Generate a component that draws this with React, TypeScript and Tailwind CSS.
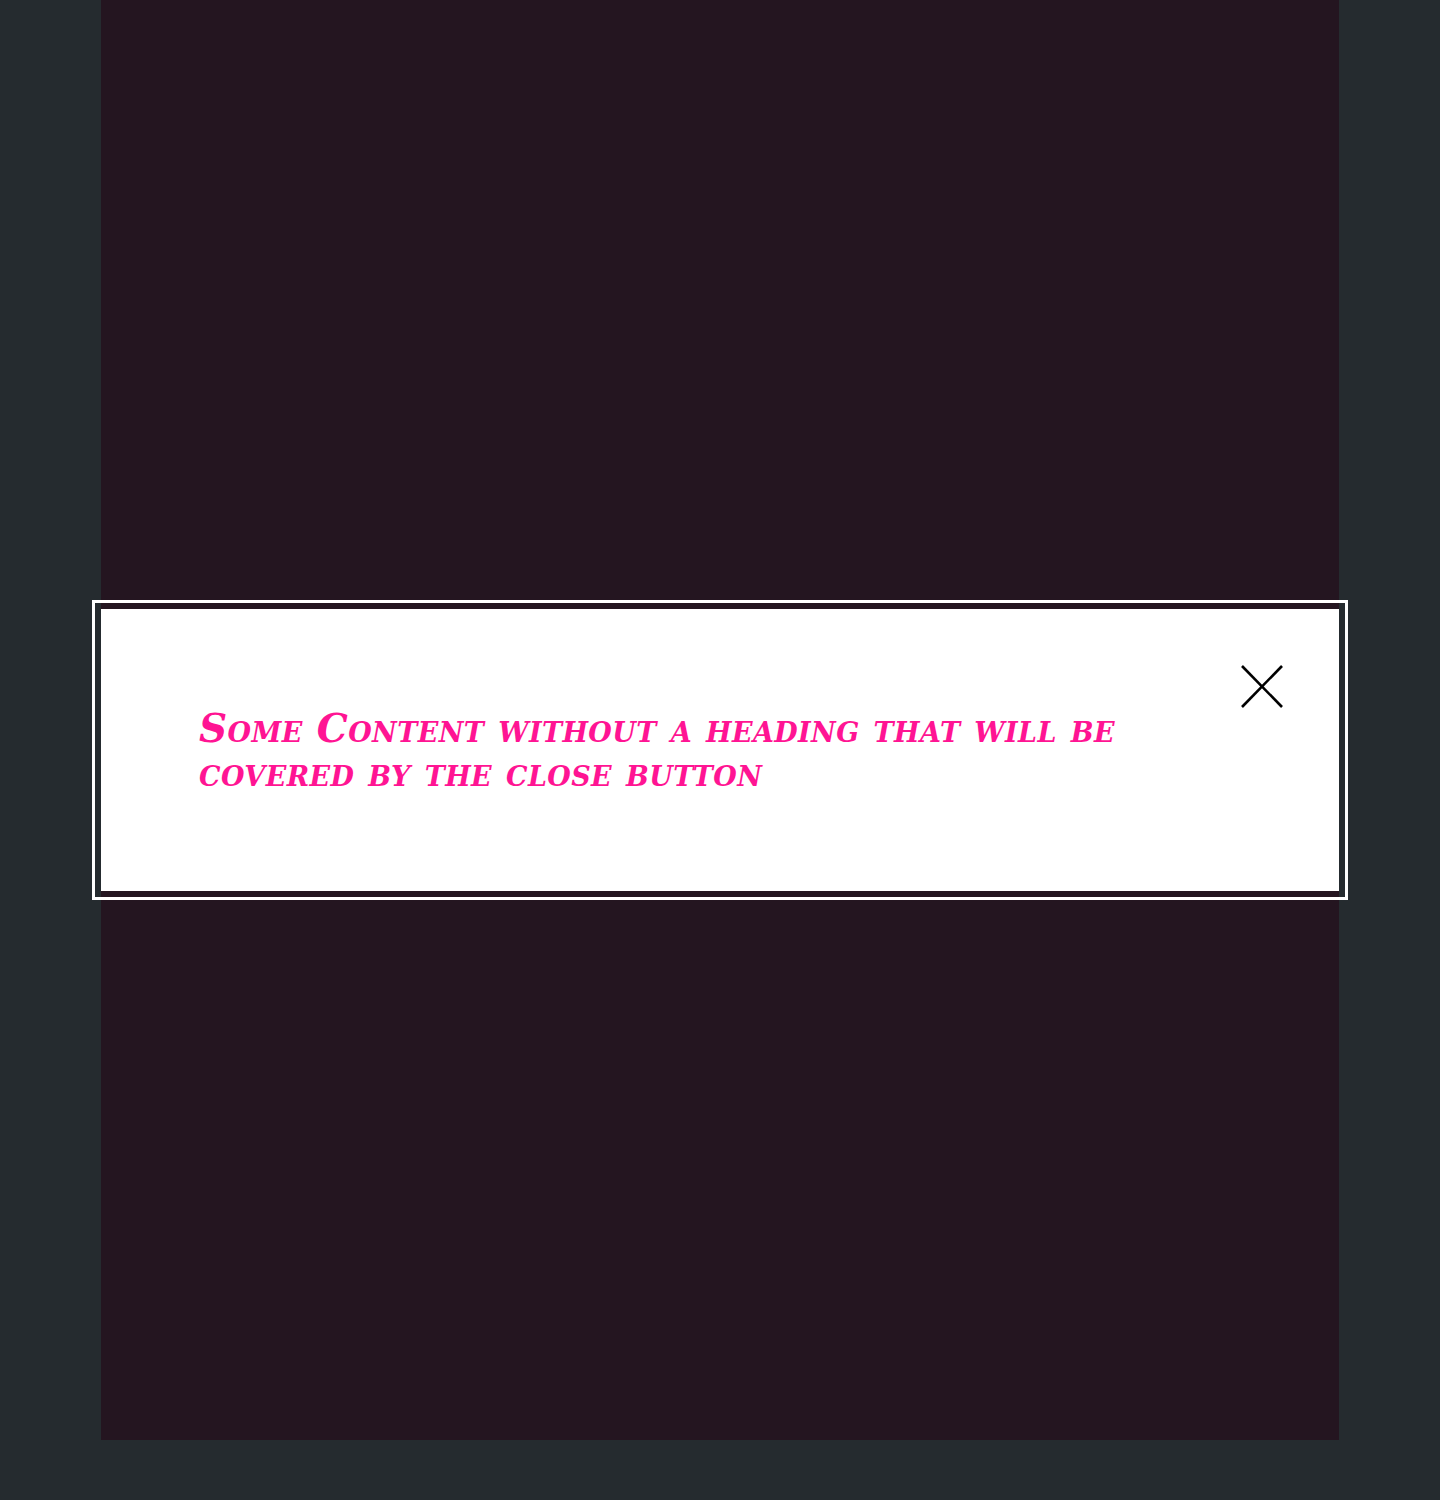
export default function App() {
  return (
    <div className="min-h-[1500px] bg-[#252b2f]">
      <div className="mx-auto h-[1440px] w-[1238px] bg-[#241520]" />
      <Dialog />
    </div>
  );
}

const Dialog = () => {
  return (
    <div className="fixed inset-0 flex items-center justify-center">
      <div className="border-[6px] border-transparent outline-[3px] outline-solid outline-white">
        <div className="relative w-[1238px] bg-white py-[97px] pl-[98px] pr-[110px]">
          <p className="font-['DejaVu_Serif',serif] text-[39px] leading-[44px] tracking-[0.4px] font-bold italic text-[#ff1493] [font-variant:small-caps]">
            Some Content without a heading that will be covered by the close button
          </p>
          <button
            type="button"
            aria-label="Close"
            className="absolute right-[56px] top-[56px] h-[43px] w-[42px]"
          >
            <svg viewBox="0 0 42 43" className="h-full w-full" fill="none" stroke="black" strokeWidth="2.6">
              <line x1="1" y1="1" x2="41" y2="42" />
              <line x1="41" y1="1" x2="1" y2="42" />
            </svg>
          </button>
        </div>
      </div>
    </div>
  );
};
